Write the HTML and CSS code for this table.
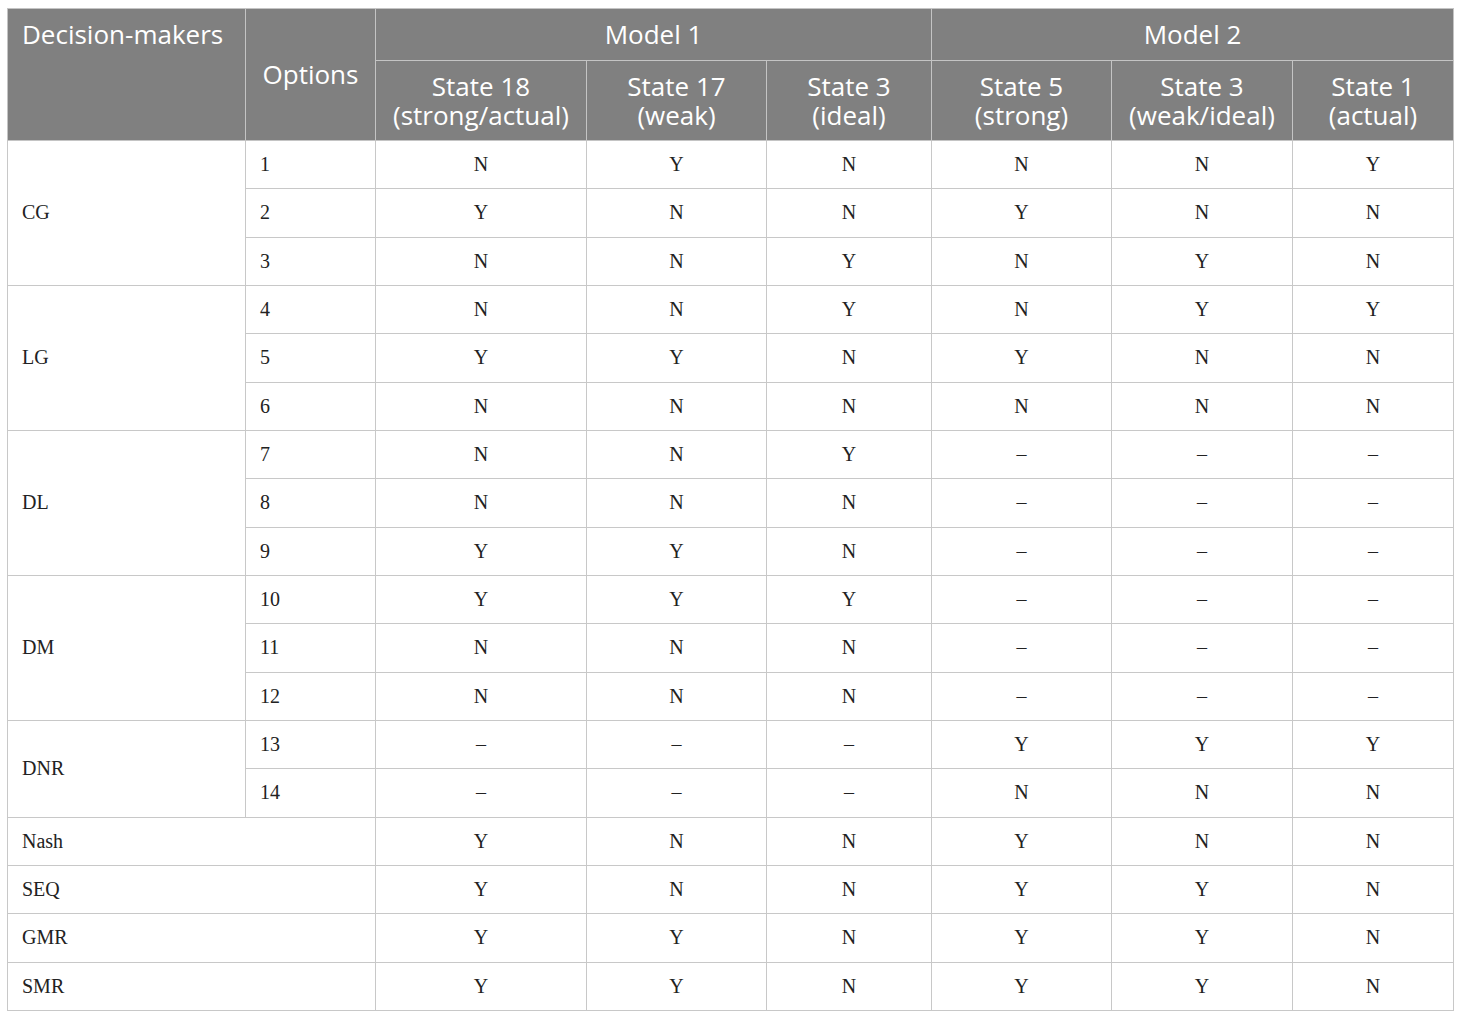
FILE: index.html
```html
<!DOCTYPE html>
<html>
<head>
<meta charset="utf-8">
<link rel="stylesheet" href="styles.css">
</head>
<body>
<table class="tbl">
<colgroup>
<col class="c-dm"><col class="c-op"><col class="c-s18"><col class="c-s17"><col class="c-s3a"><col class="c-s5"><col class="c-s3b"><col class="c-s1">
</colgroup>
<thead>
<tr class="h1">
<th rowspan="2" class="th-left th-top">Decision-makers</th>
<th rowspan="2" class="th-mid">Options</th>
<th colspan="3">Model 1</th>
<th colspan="3">Model 2</th>
</tr>
<tr class="h2">
<th>State 18<br>(strong/actual)</th>
<th>State 17<br>(weak)</th>
<th>State 3<br>(ideal)</th>
<th>State 5<br>(strong)</th>
<th>State 3<br>(weak/ideal)</th>
<th>State 1<br>(actual)</th>
</tr>
</thead>
<tbody>
<tr><td rowspan="3" class="lbl">CG</td><td class="opt">1</td><td>N</td><td>Y</td><td>N</td><td>N</td><td>N</td><td>Y</td></tr>
<tr><td class="opt">2</td><td>Y</td><td>N</td><td>N</td><td>Y</td><td>N</td><td>N</td></tr>
<tr><td class="opt">3</td><td>N</td><td>N</td><td>Y</td><td>N</td><td>Y</td><td>N</td></tr>
<tr><td rowspan="3" class="lbl">LG</td><td class="opt">4</td><td>N</td><td>N</td><td>Y</td><td>N</td><td>Y</td><td>Y</td></tr>
<tr><td class="opt">5</td><td>Y</td><td>Y</td><td>N</td><td>Y</td><td>N</td><td>N</td></tr>
<tr><td class="opt">6</td><td>N</td><td>N</td><td>N</td><td>N</td><td>N</td><td>N</td></tr>
<tr><td rowspan="3" class="lbl">DL</td><td class="opt">7</td><td>N</td><td>N</td><td>Y</td><td>–</td><td>–</td><td>–</td></tr>
<tr><td class="opt">8</td><td>N</td><td>N</td><td>N</td><td>–</td><td>–</td><td>–</td></tr>
<tr><td class="opt">9</td><td>Y</td><td>Y</td><td>N</td><td>–</td><td>–</td><td>–</td></tr>
<tr><td rowspan="3" class="lbl">DM</td><td class="opt">10</td><td>Y</td><td>Y</td><td>Y</td><td>–</td><td>–</td><td>–</td></tr>
<tr><td class="opt">11</td><td>N</td><td>N</td><td>N</td><td>–</td><td>–</td><td>–</td></tr>
<tr><td class="opt">12</td><td>N</td><td>N</td><td>N</td><td>–</td><td>–</td><td>–</td></tr>
<tr><td rowspan="2" class="lbl">DNR</td><td class="opt">13</td><td>–</td><td>–</td><td>–</td><td>Y</td><td>Y</td><td>Y</td></tr>
<tr><td class="opt">14</td><td>–</td><td>–</td><td>–</td><td>N</td><td>N</td><td>N</td></tr>
<tr><td colspan="2" class="lbl">Nash</td><td>Y</td><td>N</td><td>N</td><td>Y</td><td>N</td><td>N</td></tr>
<tr><td colspan="2" class="lbl">SEQ</td><td>Y</td><td>N</td><td>N</td><td>Y</td><td>Y</td><td>N</td></tr>
<tr><td colspan="2" class="lbl">GMR</td><td>Y</td><td>Y</td><td>N</td><td>Y</td><td>Y</td><td>N</td></tr>
<tr><td colspan="2" class="lbl">SMR</td><td>Y</td><td>Y</td><td>N</td><td>Y</td><td>Y</td><td>N</td></tr>
</tbody>
</table>
</body>
</html>
```
FILE: styles.css
```css
html, body {
  margin: 0;
  background: #ffffff;
}
body {
  padding: 8px 7px;
}
.tbl {
  border-collapse: collapse;
  table-layout: fixed;
  width: 1446px;
}
.c-dm { width: 238px; }
.c-op { width: 130px; }
.c-s18 { width: 211px; }
.c-s17 { width: 180px; }
.c-s3a { width: 165px; }
.c-s5 { width: 180px; }
.c-s3b { width: 181px; }
.c-s1 { width: 161px; }
.tbl th {
  background: #808080;
  color: #ffffff;
  font-family: "Open Sans", "Noto Sans", sans-serif;
  font-weight: 400;
  font-size: 26px;
  line-height: 29px;
  border: 1px solid #c4c4c4;
  padding: 0 6px;
  text-align: center;
  vertical-align: middle;
}
.h1 th { height: 51px; }
.h2 th { height: 79px; }
.tbl th.th-left {
  text-align: left;
  padding-left: 14px;
}
.tbl th.th-top {
  vertical-align: top;
  padding-top: 11px;
}
.tbl td {
  font-family: "Liberation Serif", "Times New Roman", serif;
  font-size: 20px;
  color: #222222;
  border: 1px solid #c8c8c8;
  text-align: center;
  vertical-align: middle;
  height: 47.33px;
  padding: 0;
}
.tbl td.opt, .tbl td.lbl {
  text-align: left;
  padding-left: 14px;
}
```
